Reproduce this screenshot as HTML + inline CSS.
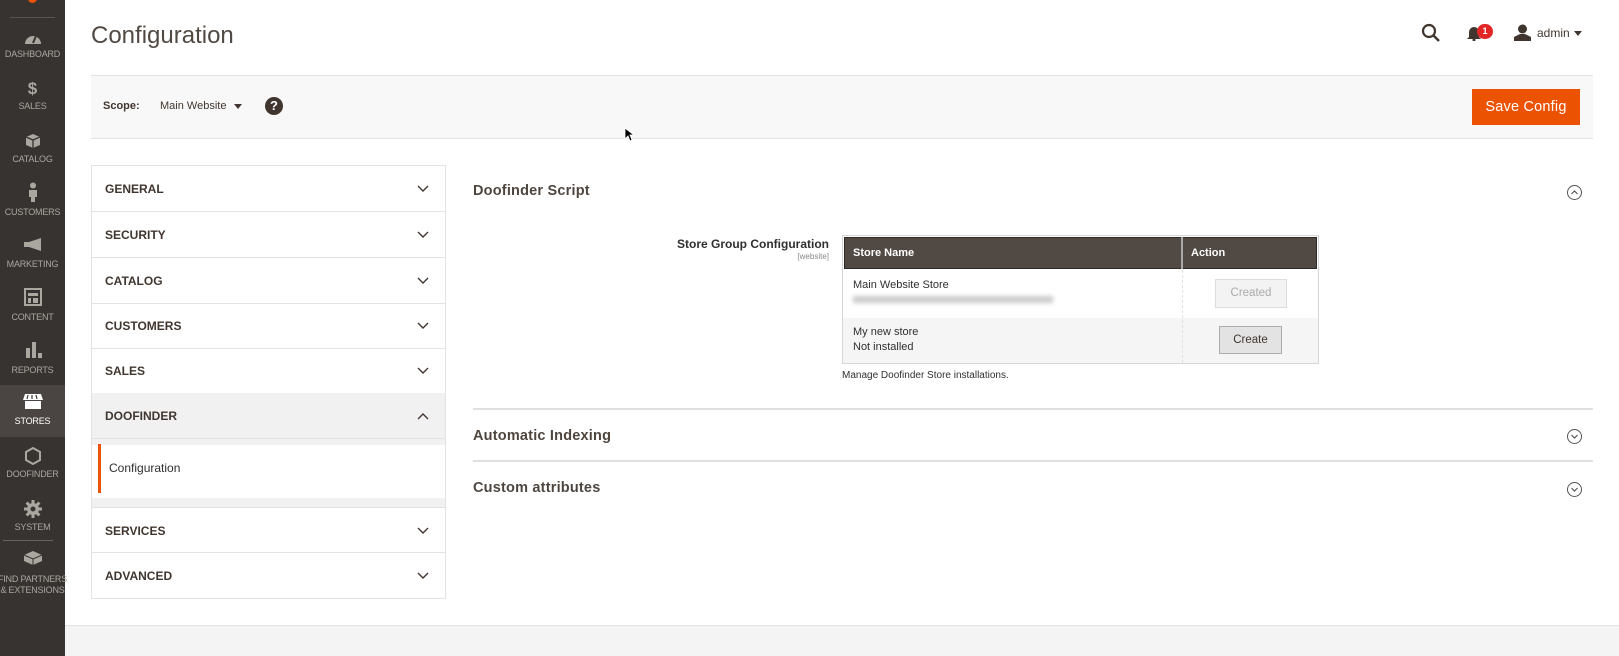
<!DOCTYPE html>
<html><head><meta charset="utf-8"><style>
*{box-sizing:border-box;margin:0;padding:0}
body{width:1619px;height:656px;overflow:hidden;background:#fff;font-family:"Liberation Sans",sans-serif;color:#303030;position:relative}
.sb{position:absolute;left:0;top:0;width:65px;height:656px;background:#373330}
.sb .it{position:absolute;left:0;width:65px;text-align:center;color:#aaa6a0;font-size:9px;letter-spacing:-.2px}
.sb .ic{position:absolute;left:0;width:65px;display:flex;justify-content:center}
.abs{position:absolute}
.nav{position:absolute;left:91px;top:165px;width:355px;height:434px;border:1px solid #e3e3e3}
.row{position:absolute;left:0;width:353px;height:46px;border-bottom:1px solid #e3e3e3;font-weight:bold;font-size:12px;color:#41362f;padding-left:13px;line-height:46px}
.row svg{position:absolute;right:16px;top:19px}
.sec{position:absolute;left:473px;font-size:14.5px;color:#41362f;font-weight:bold;letter-spacing:.2px;opacity:.92}
.circ{position:absolute;left:1567px;width:15px;height:15px;border:1px solid #555;border-radius:50%}
</style></head><body>
<div class="sb">
 <div class="abs" style="left:10px;top:17px;width:45px;height:1px;background:#5a5450"></div>
 <div class="abs" style="left:28px;top:-6px;width:9px;height:9px;border-radius:50%;background:#eb5202"></div>
 <div class="ic" style="top:32px"><svg width="18" height="12" viewBox="0 0 18 12"><path d="M1 12A8 8 0 0 1 17 12Z" fill="#aaa6a0"/><path d="M9 11L12 4" stroke="#373330" stroke-width="2"/></svg></div>
 <div class="it" style="top:49px">DASHBOARD</div>
 <div class="ic" style="top:80px;color:#aaa6a0;font-weight:bold;font-size:17px;line-height:17px">$</div>
 <div class="it" style="top:101px">SALES</div>
 <div class="ic" style="top:133px"><svg width="16" height="16"><path d="M8 1L15 4V12L8 15L1 12V4Z" fill="#aaa6a0"/><path d="M1 4L8 7L15 4M8 7V15" stroke="#373330" stroke-width="1.3" fill="none"/></svg></div>
 <div class="it" style="top:154px">CATALOG</div>
 <div class="ic" style="top:182px"><svg width="12" height="20"><circle cx="6" cy="3.5" r="3" fill="#aaa6a0"/><path d="M2 8H10V15H8V20H4V15H2Z" fill="#aaa6a0"/></svg></div>
 <div class="it" style="top:207px">CUSTOMERS</div>
 <div class="ic" style="top:238px"><svg width="20" height="14"><path d="M1 4H6L18 0V13L6 9H1Z" fill="#aaa6a0"/></svg></div>
 <div class="it" style="top:259px">MARKETING</div>
 <div class="ic" style="top:288px"><svg width="18" height="18"><rect x="1" y="1" width="16" height="16" fill="none" stroke="#aaa6a0" stroke-width="2"/><rect x="4" y="5" width="10" height="3" fill="#aaa6a0"/><rect x="4" y="10" width="3" height="5" fill="#aaa6a0"/><rect x="9" y="10" width="5" height="5" fill="#aaa6a0"/></svg></div>
 <div class="it" style="top:312px">CONTENT</div>
 <div class="ic" style="top:342px"><svg width="18" height="16"><rect x="2" y="6" width="4" height="10" fill="#aaa6a0"/><rect x="8" y="0" width="4" height="16" fill="#aaa6a0"/><rect x="14" y="11" width="4" height="5" fill="#aaa6a0"/></svg></div>
 <div class="it" style="top:365px">REPORTS</div>
 <div class="abs" style="left:0;top:385px;width:65px;height:52px;background:#4a4542"></div>
 <div class="ic" style="top:393px"><svg width="20" height="16"><path d="M2 1H18L20 7H0Z" fill="#fff"/><path d="M2 8H18V16H2Z" fill="#fff"/><path d="M5 2L4 6M9 2V6M13 2L14 6" stroke="#4a4542" stroke-width="1.3"/></svg></div>
 <div class="it" style="top:416px;color:#fff">STORES</div>
 <div class="ic" style="top:447px"><svg width="16" height="18"><path d="M8 1L15 5V13L8 17L1 13V5Z" fill="none" stroke="#aaa6a0" stroke-width="2"/></svg></div>
 <div class="it" style="top:469px">DOOFINDER</div>
 <div class="ic" style="top:500px"><svg width="18" height="18" viewBox="0 0 18 18"><circle cx="9" cy="9" r="6" fill="#aaa6a0"/><path d="M9 0V18M0 9H18M2.6 2.6L15.4 15.4M15.4 2.6L2.6 15.4" stroke="#aaa6a0" stroke-width="3"/><circle cx="9" cy="9" r="2.5" fill="#373330"/></svg></div>
 <div class="it" style="top:522px">SYSTEM</div>
 <div class="abs" style="left:3px;top:540px;width:50px;height:1px;background:#6a6460"></div>
 <div class="ic" style="top:550px"><svg width="20" height="16"><path d="M10 1L19 5V11L10 15L1 11V5Z" fill="#aaa6a0"/><path d="M1 5L10 9L19 5M10 9V15" stroke="#373330" stroke-width="1" fill="none"/></svg></div>
 <div class="it" style="top:574px;left:-5px;width:75px">FIND PARTNERS</div>
 <div class="it" style="top:585px;left:-5px;width:75px">&amp; EXTENSIONS</div>
</div>

<div class="abs" style="left:91px;top:22px;font-size:24px;color:#514943">Configuration</div>
<svg class="abs" style="left:1421px;top:23px" width="20" height="20"><circle cx="8" cy="8" r="6" fill="none" stroke="#41362f" stroke-width="2.2"/><path d="M12.5 12.5L18 18" stroke="#41362f" stroke-width="2.5"/></svg>
<svg class="abs" style="left:1467px;top:26px" width="14" height="15"><path d="M2 11V6A5 5 0 0 1 12 6V11L14 13H0Z" fill="#41362f"/><circle cx="7" cy="14" r="1.5" fill="#41362f"/></svg>
<div class="abs" style="left:1477px;top:24px;width:16px;height:15px;border-radius:8px;background:#e22626;color:#fff;font-size:9px;font-weight:bold;text-align:center;line-height:15px">1</div>
<svg class="abs" style="left:1514px;top:24px" width="17" height="17"><circle cx="8.5" cy="5" r="4.5" fill="#41362f"/><path d="M0 17V13L6 10H11L17 13V17Z" fill="#41362f"/></svg>
<div class="abs" style="left:1537px;top:26px;font-size:12px;color:#41362f">admin</div>
<div class="abs" style="left:1574px;top:31px;border:4px solid transparent;border-top:5px solid #41362f"></div>

<div class="abs" style="left:91px;top:75px;width:1502px;height:64px;background:#f8f8f8;border-top:1px solid #e3e3e3;border-bottom:1px solid #e3e3e3"></div>
<div class="abs" style="left:103px;top:100px;font-size:11px;font-weight:bold;color:#41362f">Scope:</div>
<div class="abs" style="left:160px;top:100px;font-size:11px;color:#41362f">Main Website</div>
<div class="abs" style="left:234px;top:104px;border:4px solid transparent;border-top:5px solid #41362f"></div>
<div class="abs" style="left:265px;top:97px;width:18px;height:18px;border-radius:50%;background:#41362f;color:#fff;font-weight:bold;font-size:13px;text-align:center;line-height:18px">?</div>
<div class="abs" style="left:1472px;top:89px;width:108px;height:36px;background:#eb5202;color:#fff;font-size:14.5px;text-align:center;line-height:36px;letter-spacing:.2px">Save Config</div>

<div class="nav">
 <div class="row" style="top:0">GENERAL<svg width="12" height="8"><path d="M1 1L6 6L11 1" stroke="#41362f" stroke-width="1.4" fill="none"/></svg></div>
 <div class="row" style="top:46px">SECURITY<svg width="12" height="8"><path d="M1 1L6 6L11 1" stroke="#41362f" stroke-width="1.4" fill="none"/></svg></div>
 <div class="row" style="top:92px">CATALOG<svg width="12" height="8"><path d="M1 1L6 6L11 1" stroke="#41362f" stroke-width="1.4" fill="none"/></svg></div>
 <div class="row" style="top:137px">CUSTOMERS<svg width="12" height="8"><path d="M1 1L6 6L11 1" stroke="#41362f" stroke-width="1.4" fill="none"/></svg></div>
 <div class="row" style="top:182px">SALES<svg width="12" height="8"><path d="M1 1L6 6L11 1" stroke="#41362f" stroke-width="1.4" fill="none"/></svg></div>
 <div class="row" style="top:227px;background:#f1f1f1">DOOFINDER<svg width="12" height="8"><path d="M1 7L6 2L11 7" stroke="#41362f" stroke-width="1.4" fill="none"/></svg></div>
 <div class="abs" style="left:0;top:273px;width:353px;height:68px;background:#f1f1f1"></div>
 <div class="abs" style="left:0;top:279px;width:353px;height:53px;background:#fff"></div>
 <div class="abs" style="left:6px;top:278px;width:3px;height:49px;background:#eb5202"></div>
 <div class="abs" style="left:17px;top:295px;font-size:12px;color:#303030">Configuration</div>
 <div class="row" style="top:341px;border-top:1px solid #e3e3e3">SERVICES<svg width="12" height="8"><path d="M1 1L6 6L11 1" stroke="#41362f" stroke-width="1.4" fill="none"/></svg></div>
 <div class="row" style="top:387px;border-bottom:none">ADVANCED<svg width="12" height="8"><path d="M1 1L6 6L11 1" stroke="#41362f" stroke-width="1.4" fill="none"/></svg></div>
</div>

<div class="sec" style="top:183px">Doofinder Script</div>
<div class="circ" style="top:185px"><svg width="13" height="13" style="position:absolute;left:0;top:0"><path d="M3.5 8L6.5 5L9.5 8" stroke="#555" stroke-width="1.2" fill="none"/></svg></div>
<div class="abs" style="left:600px;top:237px;width:229px;text-align:right;font-size:12px;font-weight:bold;color:#303030">Store Group Configuration</div>
<div class="abs" style="left:700px;top:252px;width:129px;text-align:right;font-size:8px;color:#888">[website]</div>

<div class="abs" style="left:842px;top:235px;width:477px;height:129px;border:1px solid #d6d6d6;background:#fff">
 <div class="abs" style="left:1px;top:1px;width:473px;height:32px;background:#514943;border:1px solid #2f2a26"></div>
 <div class="abs" style="left:338px;top:1px;width:2px;height:32px;background:#aaa"></div>
 <div class="abs" style="left:10px;top:11px;font-size:11px;font-weight:bold;color:#fff">Store Name</div>
 <div class="abs" style="left:348px;top:11px;font-size:11px;font-weight:bold;color:#fff">Action</div>
 <div class="abs" style="left:0;top:82px;width:475px;height:45px;background:#f5f5f5"></div>
 <div class="abs" style="left:339px;top:34px;height:93px;border-left:1px dashed #e0e0e0"></div>
 <div class="abs" style="left:10px;top:43px;font-size:11px;color:#303030">Main Website Store</div>
 <div class="abs" style="left:10px;top:60px;width:200px;height:7px;background:#ccc;filter:blur(2px)"></div>
 <div class="abs" style="left:372px;top:43px;width:72px;height:29px;border:1px solid #ddd;background:#f3f3f3;color:#aaa;font-size:11.5px;text-align:center;line-height:27px">Created</div>
 <div class="abs" style="left:10px;top:90px;font-size:11px;color:#303030">My new store</div>
 <div class="abs" style="left:10px;top:105px;font-size:11px;color:#303030">Not installed</div>
 <div class="abs" style="left:376px;top:90px;width:63px;height:28px;border:1px solid #adadad;background:#e3e3e3;color:#41362f;font-size:11.5px;text-align:center;line-height:26px">Create</div>
</div>
<div class="abs" style="left:842px;top:370px;font-size:10px;color:#303030">Manage Doofinder Store installations.</div>

<div class="abs" style="left:473px;top:408px;width:1120px;height:2px;background:#e0e0e0"></div>
<div class="sec" style="top:428px">Automatic Indexing</div>
<div class="circ" style="top:429px"><svg width="13" height="13" style="position:absolute;left:0;top:0"><path d="M3.5 5L6.5 8L9.5 5" stroke="#555" stroke-width="1.2" fill="none"/></svg></div>
<div class="abs" style="left:473px;top:460px;width:1120px;height:2px;background:#e0e0e0"></div>
<div class="sec" style="top:480px">Custom attributes</div>
<div class="circ" style="top:482px"><svg width="13" height="13" style="position:absolute;left:0;top:0"><path d="M3.5 5L6.5 8L9.5 5" stroke="#555" stroke-width="1.2" fill="none"/></svg></div>

<div class="abs" style="left:65px;top:625px;width:1554px;height:31px;background:#f4f4f4;border-top:1px solid #e3e3e3"></div>
<svg class="abs" style="left:624px;top:127px" width="10" height="15"><path d="M1 1V12L4 9L6 14L8 13L6 8H10Z" fill="#000" stroke="#fff" stroke-width=".8"/></svg>
</body></html>
